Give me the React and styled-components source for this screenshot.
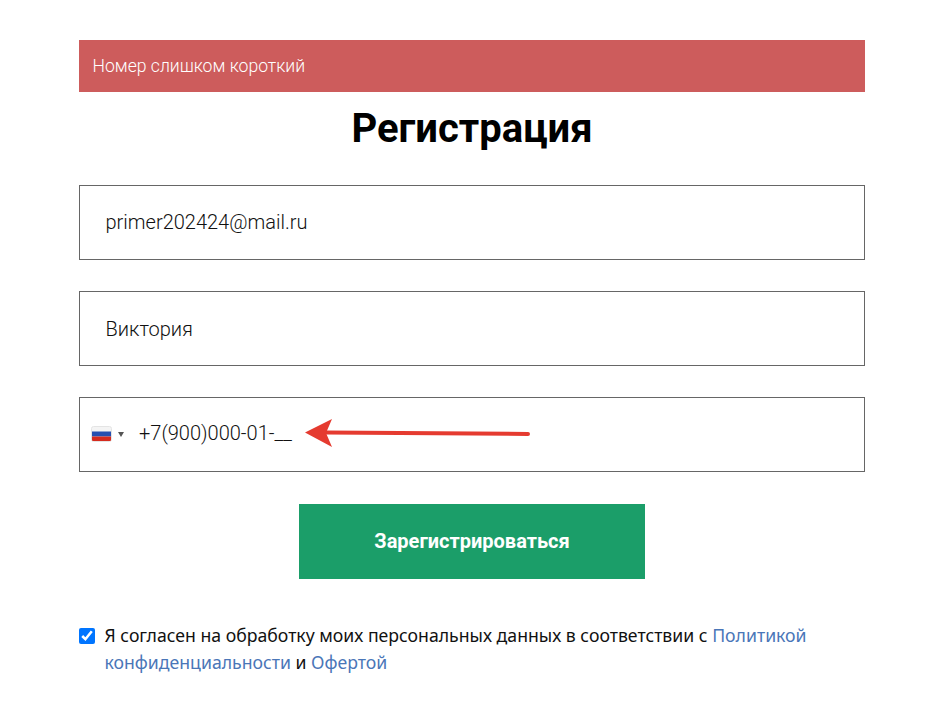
import React from "react"
import styled, { createGlobalStyle } from "styled-components"

const Global = createGlobalStyle`
  html, body { margin: 0; padding: 0; background: #fff; }
  * { box-sizing: border-box; }
`
const Page = styled.div`
  width: 950px;
  height: 701px;
  overflow: hidden;
  padding: 40px 85px 0 79px;
  font-family: Roboto, sans-serif;
`
const Alert = styled.div`
  height: 52px;
  background: #cd5c5c;
  color: #fff;
  font-size: 17.6px;
  font-weight: 300;
  line-height: 52px;
  padding-left: 13.5px;
`
const Title = styled.h1`
  margin: 12px 0 32px;
  text-align: center;
  font-size: 40px;
  line-height: 49px;
  font-weight: 700;
  color: #000;
`
const Fields = styled.div`
  display: flex;
  flex-direction: column;
  gap: 31px;
`
const Field = styled.div`
  height: 75px;
  border: 1px solid #666;
  display: flex;
  align-items: center;
  padding-left: ${p => p.$phone ? "11px" : "25.5px"};
  padding-bottom: ${p => p.$lift || "0"};
  font-size: 20px;
  font-weight: 300;
  color: #111;
`
const Flag = styled.svg`
  width: 21px;
  height: 16px;
  margin-top: 2px;
  display: block;
`
const Caret = styled.span`
  width: 0;
  height: 0;
  margin: 2px 15px 0 6px;
  border-left: 3px solid transparent;
  border-right: 3px solid transparent;
  border-top: 5px solid #555;
`
const Arrow = styled.svg`
  margin-left: 12px;
  width: 226px;
  height: 30px;
`
const Submit = styled.button`
  display: block;
  width: 346px;
  height: 75px;
  margin: 32px auto 0;
  padding-bottom: 3px;
  border: none;
  background: #1b9e69;
  color: #fff;
  font-family: inherit;
  font-size: 20px;
  font-weight: 700;
`
const Consent = styled.label`
  display: block;
  margin-top: 43px;
  padding-left: 25.5px;
  position: relative;
  font-family: "Noto Sans", sans-serif;
  font-size: 17.67px;
  line-height: 27px;
  color: #111;
`
const Check = styled.input`
  position: absolute;
  left: 0;
  top: 6px;
  width: 16px;
  height: 16px;
  margin: 0;
  accent-color: #0075ff;
`
const Link = styled.a`
  color: #4a76b8;
  text-decoration: none;
`

export default function App() {
  return (
    <Page>
      <Global />
      <Alert>Номер слишком короткий</Alert>
      <Title>Регистрация</Title>
      <Fields>
        <Field $lift="1px">primer202424@mail.ru</Field>
        <Field>Виктория</Field>
        <Field $phone $lift="3px">
          <Flag viewBox="0 0 21 16">
            <rect x="0.5" y="0.5" width="20" height="15" rx="2" fill="#f4f4f4" stroke="#e4e4e4" />
            <rect x="1" y="5.5" width="19" height="5" fill="#2550b0" />
            <path d="M1 10.5h19v3.5a1 1 0 0 1-1 1H2a1 1 0 0 1-1-1z" fill="#d52b1e" />
          </Flag>
          <Caret />
          +7(900)000-01-__
          <Arrow viewBox="0 0 226 30">
            <path d="M224 16 L 22 14.5" stroke="#e53b30" strokeWidth="4" strokeLinecap="round" fill="none" />
            <path d="M1 14.5 L 28 1 L 22 15 L 28 29 Z" fill="#e53b30" />
          </Arrow>
        </Field>
      </Fields>
      <Submit>Зарегистрироваться</Submit>
      <Consent>
        <Check type="checkbox" defaultChecked />
        Я согласен на обработку моих персональных данных в соответствии с <Link href="#">Политикой конфиденциальности</Link> и <Link href="#">Офертой</Link>
      </Consent>
    </Page>
  )
}
